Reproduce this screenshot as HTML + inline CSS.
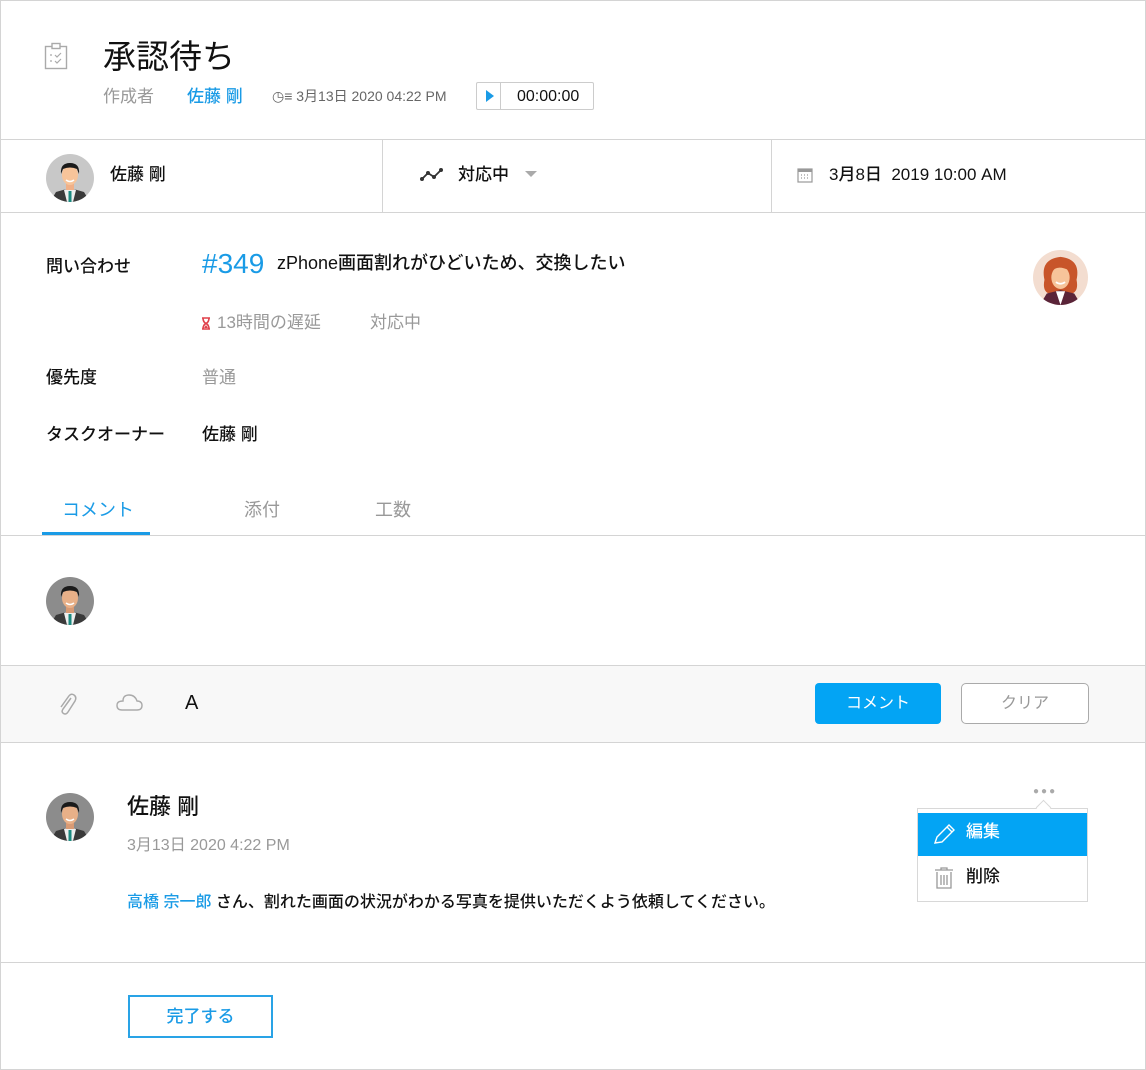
<!DOCTYPE html>
<html><head><meta charset="utf-8"><style>
*{margin:0;padding:0;box-sizing:border-box}
body{width:1146px;height:1070px;background:#fff;font-family:"Liberation Sans","Noto Sans CJK JP",sans-serif;color:#111;position:relative;overflow:hidden;line-height:1.2}
.a{position:absolute;white-space:nowrap}
.hl{position:absolute;left:0;width:1146px;height:1px;background:#d4d4d4}
.vl{position:absolute;width:1px;background:#d4d4d4}
.blue{color:#1a9be6}
.gray{color:#999}
</style></head><body>
<div style="position:absolute;left:0;top:0;width:1146px;height:1070px;border:1px solid #d4d4d4"></div>

<svg class="a" style="left:44px;top:42px" width="24" height="28" viewBox="0 0 24 28"><rect x="1.5" y="4.5" width="21" height="22" fill="none" stroke="#aaa" stroke-width="1.4"/><rect x="8" y="1.5" width="8" height="5" fill="#fff" stroke="#aaa" stroke-width="1.4"/><path d="M6 13h2M6 19h2M11 13l2 2 4-4M11 19l2 2 4-4" stroke="#aaa" stroke-width="1.2" fill="none"/></svg>
<div class="a" style="left:103px;top:37px;font-size:33px;font-weight:400">承認待ち</div>
<div class="a gray" style="left:103px;top:87px;font-size:17px">作成者</div>
<div class="a blue" style="left:187px;top:87px;font-size:17px;font-weight:500">佐藤 剛</div>
<div class="a" style="left:272px;top:88px;font-size:14px;color:#666">◷≡ 3月13日 2020 04:22 PM</div>
<div class="a" style="left:476px;top:82px;width:118px;height:28px;border:1px solid #ccc;border-radius:2px"></div>
<div class="vl" style="left:500px;top:83px;height:26px;background:#ccc"></div>
<svg class="a" style="left:485px;top:89px" width="10" height="14"><path d="M1 1L9 7L1 13Z" fill="#1a9be6"/></svg>
<div class="a" style="left:517px;top:87px;font-size:16px">00:00:00</div>

<div class="hl" style="top:139px"></div>
<div class="vl" style="left:382px;top:140px;height:73px"></div>
<div class="vl" style="left:771px;top:140px;height:73px"></div>
<div class="hl" style="top:212px"></div>

<svg class="a" style="left:46px;top:154px" width="48" height="48" viewBox="0 0 48 48"><clipPath id="c1"><circle cx="24" cy="24" r="24"/></clipPath><g clip-path="url(#c1)"><rect width="48" height="48" fill="#c8c8c8"/><path d="M4 48L10 38L24 34L38 38L44 48Z" fill="#3a3a3a"/><path d="M18 36L24 34L30 36L27 48H21Z" fill="#eee"/><rect x="22.5" y="37" width="3" height="11" fill="#1a8a80"/><rect x="20" y="26" width="8" height="10" fill="#f0b088"/><ellipse cx="24" cy="21" rx="8" ry="10" fill="#f7c49a"/><path d="M15 20Q14 9 24 9Q34 9 33 20L31 15Q24 12 17 15Z" fill="#1a1a1a"/><path d="M20 26Q24 29 28 26" stroke="#fff" stroke-width="1.5" fill="none"/></g></svg>
<div class="a" style="left:110px;top:165px;font-size:17px;font-weight:500">佐藤 剛</div>
<svg class="a" style="left:420px;top:167px" width="24" height="16"><path d="M2 12L8 6L14 10L21 3" stroke="#333" stroke-width="1.8" fill="none"/><circle cx="2" cy="12" r="2" fill="#333"/><circle cx="8" cy="6" r="2" fill="#333"/><circle cx="14" cy="10" r="2" fill="#333"/><circle cx="21" cy="3" r="2" fill="#333"/></svg>
<div class="a" style="left:458px;top:165px;font-size:17px;font-weight:500">対応中</div>
<svg class="a" style="left:525px;top:171px" width="12" height="8"><path d="M0 0H12L6 6Z" fill="#aaa"/></svg>
<svg class="a" style="left:797px;top:167px" width="16" height="16"><rect x="1" y="2" width="14" height="13" fill="none" stroke="#999" stroke-width="1.2"/><rect x="1" y="2" width="14" height="3" fill="#999"/><path d="M4 8h1M7 8h1M10 8h1M4 11h1M7 11h1M10 11h1" stroke="#999" stroke-width="1.2"/></svg>
<div class="a" style="left:829px;top:165px;font-size:17px;font-weight:500">3月8日&nbsp; 2019 10:00 AM</div>

<div class="a" style="left:46px;top:257px;font-size:17px;font-weight:500">問い合わせ</div>
<div class="a blue" style="left:202px;top:247px;font-size:28px">#349</div>
<div class="a" style="left:277px;top:253px;font-size:18px;font-weight:500">zPhone画面割れがひどいため、交換したい</div>
<svg class="a" style="left:1033px;top:250px" width="55" height="55" viewBox="0 0 48 48"><clipPath id="c2"><circle cx="24" cy="24" r="24"/></clipPath><g clip-path="url(#c2)"><rect width="48" height="48" fill="#f3ddd0"/><path d="M10 26Q6 8 24 6Q42 8 38 26Q40 36 34 38H14Q8 36 10 26Z" fill="#c8552a"/><path d="M6 48L12 38L24 35L36 38L42 48Z" fill="#5a2438"/><path d="M20 36L24 48L28 36Z" fill="#fff"/><ellipse cx="24" cy="24" rx="8" ry="10" fill="#f7c49a"/><path d="M16 20Q20 12 32 18Q30 10 24 10Q15 11 16 20Z" fill="#c8552a"/><path d="M20 28Q24 31 28 28" stroke="#fff" stroke-width="1.5" fill="none"/></g></svg>
<svg class="a" style="left:201px;top:317px" width="10" height="13"><path d="M1 1H9M1 12H9M2 1Q2 5 5 6.5Q8 5 8 1M2 12Q2 8 5 6.5Q8 8 8 12" stroke="#e0404a" stroke-width="1.6" fill="none"/><path d="M3 11L5 8L7 11Z" fill="#e0404a"/></svg>
<div class="a gray" style="left:217px;top:313px;font-size:17px">13時間の遅延</div>
<div class="a gray" style="left:370px;top:313px;font-size:17px">対応中</div>
<div class="a" style="left:46px;top:368px;font-size:17px;font-weight:500">優先度</div>
<div class="a gray" style="left:202px;top:368px;font-size:17px">普通</div>
<div class="a" style="left:46px;top:425px;font-size:17px;font-weight:500">タスクオーナー</div>
<div class="a" style="left:202px;top:425px;font-size:17px;font-weight:500">佐藤 剛</div>

<div class="a blue" style="left:62px;top:500px;font-size:18px">コメント</div>
<div class="a gray" style="left:244px;top:500px;font-size:18px">添付</div>
<div class="a gray" style="left:375px;top:500px;font-size:18px">工数</div>
<div class="a" style="left:42px;top:532px;width:108px;height:3px;background:#1a9be6"></div>
<div class="hl" style="top:535px"></div>

<svg width="0" height="0" style="position:absolute"><defs><g id="m2"><clipPath id="c3"><circle cx="24" cy="24" r="24"/></clipPath><g clip-path="url(#c3)"><rect width="48" height="48" fill="#8c8c8c"/><path d="M4 48L10 38L24 34L38 38L44 48Z" fill="#3a3a3a"/><path d="M18 36L24 34L30 36L27 48H21Z" fill="#eee"/><rect x="22.5" y="37" width="3" height="11" fill="#1a8a80"/><rect x="20" y="26" width="8" height="10" fill="#d89a74"/><ellipse cx="24" cy="21" rx="8" ry="10" fill="#e8b088"/><path d="M15 20Q14 9 24 9Q34 9 33 20L31 15Q24 12 17 15Z" fill="#1a1a1a"/><path d="M20 26Q24 29 28 26" stroke="#fff" stroke-width="1.5" fill="none"/></g></g></defs></svg>
<svg class="a" style="left:46px;top:577px" width="48" height="48" viewBox="0 0 48 48"><use href="#m2"/></svg>

<div class="a" style="left:1px;top:665px;width:1144px;height:78px;background:#f8f8f8;border-top:1px solid #d4d4d4;border-bottom:1px solid #d4d4d4"></div>
<svg class="a" style="left:56px;top:692px" width="22" height="24"><path d="M15 6L7 17Q5 20 7.5 21.5Q10 23 12 20L19 9Q21 5 18 3Q15 1 12.5 4.5L5 15" stroke="#aaa" stroke-width="1.5" fill="none"/></svg>
<svg class="a" style="left:115px;top:693px" width="28" height="20"><path d="M7 17H22Q27 17 27 12.5Q27 8 22 8Q20 2 14 2Q8 2 8 8Q2 8 2 12.5Q2 17 7 17Z" stroke="#aaa" stroke-width="1.4" fill="none"/></svg>
<div class="a" style="left:185px;top:691px;font-size:20px;font-weight:500">A</div>
<div class="a" style="left:815px;top:683px;width:126px;height:41px;background:#03a4f4;border-radius:4px;color:#fff;font-size:16px;text-align:center;line-height:41px">コメント</div>
<div class="a" style="left:961px;top:683px;width:128px;height:41px;border:1.5px solid #aaa;border-radius:5px;background:#fff;color:#999;font-size:16px;text-align:center;line-height:39px">クリア</div>

<svg class="a" style="left:46px;top:793px" width="48" height="48" viewBox="0 0 48 48"><use href="#m2"/></svg>
<div class="a" style="left:127px;top:794px;font-size:22px;font-weight:500">佐藤 剛</div>
<div class="a gray" style="left:127px;top:836px;font-size:16px">3月13日 2020 4:22 PM</div>
<div class="a" style="left:127px;top:893px;font-size:16px;font-weight:500"><span class="blue">高橋 宗一郎</span> さん、割れた画面の状況がわかる写真を提供いただくよう依頼してください。</div>

<div class="a" style="left:1033px;top:786px;font-size:10px;color:#aaa;letter-spacing:2px">●●●</div>
<div class="a" style="left:917px;top:808px;width:171px;height:94px;border:1px solid #d8d8d8;background:#fff"></div>
<div class="a" style="left:1038px;top:802px;width:11px;height:11px;border-left:1px solid #d8d8d8;border-top:1px solid #d8d8d8;background:#fff;transform:rotate(45deg)"></div>
<div class="a" style="left:918px;top:813px;width:169px;height:43px;background:#03a4f4"></div>
<svg class="a" style="left:933px;top:823px" width="24" height="22"><path d="M2 20L4 14L16 2L21 7L9 19Z M14 4L19 9" stroke="#fff" stroke-width="1.4" fill="none"/></svg>
<div class="a" style="left:966px;top:822px;font-size:17px;color:#fff;font-weight:500">編集</div>
<svg class="a" style="left:934px;top:867px" width="20" height="22"><path d="M1 3H19M7 3V1H13V3M3 5V21H17V5M7 8V18M10 8V18M13 8V18" stroke="#999" stroke-width="1.3" fill="none"/></svg>
<div class="a" style="left:966px;top:867px;font-size:17px;font-weight:500">削除</div>

<div class="hl" style="top:962px"></div>
<div class="a" style="left:128px;top:995px;width:145px;height:43px;border:2px solid #29a3e6;color:#1a9be6;font-size:17px;text-align:center;line-height:39px;font-weight:500">完了する</div>
</body></html>
